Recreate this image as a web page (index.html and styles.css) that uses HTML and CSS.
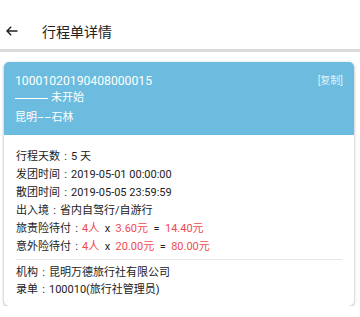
FILE: index.html
```html
<!DOCTYPE html>
<html lang="zh">
<head>
  <meta charset="UTF-8">
  <meta name="viewport" content="width=device-width, initial-scale=1.0">
  <title>行程单详情</title>
  <link rel="stylesheet" href="styles.css">
</head>
<body>
  <header class="topbar">
    <span class="back">
      <svg width="12" height="10" viewBox="0 0 12 10"><path d="M11.5 5H1.2M5.2 0.8L1 5l4.2 4.2" fill="none" stroke="#222" stroke-width="1.4"/></svg>
    </span>
    <h1>行程单详情</h1>
  </header>

  <main>
    <div class="card">
      <div class="card-head">
        <div class="head-row">
          <span class="code">10001020190408000015</span>
          <span class="copy">[复制]</span>
        </div>
        <div class="status"><span class="line"></span> 未开始</div>
        <div class="route">昆明––石林</div>
      </div>
      <div class="card-body">
        <div class="info">
          <p>行程天数<span class="colon">:</span>5 天</p>
          <p>发团时间<span class="colon">:</span>2019-05-01 00:00:00</p>
          <p>散团时间<span class="colon">:</span>2019-05-05 23:59:59</p>
          <p>出入境<span class="colon">:</span>省内自驾行/自游行</p>
          <p>旅责险待付<span class="colon">:</span><span class="red">4人</span>&nbsp;&nbsp;x&nbsp;&nbsp;<span class="red">3.60元</span>&nbsp;&nbsp;=&nbsp;&nbsp;<span class="red">14.40元</span></p>
          <p>意外险待付<span class="colon">:</span><span class="red">4人</span>&nbsp;&nbsp;x&nbsp;&nbsp;<span class="red">20.00元</span>&nbsp;&nbsp;=&nbsp;&nbsp;<span class="red">80.00元</span></p>
        </div>
        <div class="owner">
          <p>机构<span class="colon">:</span>昆明万德旅行社有限公司</p>
          <p>录单<span class="colon">:</span>100010(旅行社管理员)</p>
        </div>
      </div>
    </div>
  </main>
</body>
</html>
```

FILE: styles.css
```css
body {
  margin: 0;
  font-family: Roboto, "Noto Sans CJK SC", sans-serif;
  background: #fff;
  color: #222;
}

.topbar {
  height: 49px;
  display: flex;
  align-items: center;
  padding-left: 6px;
  border-bottom: 3px solid #dadada;
  box-sizing: content-box;
}

.back {
  display: flex;
  width: 12px;
  margin-top: 13px;
}

.topbar h1 {
  margin: 0 0 0 24px;
  font-size: 14px;
  font-weight: normal;
  color: #222;
  padding-top: 13px;
}

main {
  padding: 10px 6px 0 4px;
}

.card {
  border-radius: 5px;
  overflow: hidden;
  box-shadow: 0 1px 3px rgba(0, 0, 0, 0.35);
}

.card-head {
  background: #6bbcde;
  color: #fff;
  padding: 11px 11px 0 11px;
  height: 62px;
}

.head-row {
  display: flex;
  justify-content: space-between;
  align-items: center;
  font-size: 12.2px;
  line-height: 16px;
}

.copy {
  font-size: 10px;
  color: #e4f2f9;
}

.status {
  font-size: 11px;
  line-height: 18px;
  display: flex;
  align-items: center;
  gap: 3px;
}

.status .line {
  display: inline-block;
  width: 33px;
  height: 1px;
  background: #fff;
}

.route {
  font-size: 11px;
  line-height: 16px;
  margin-top: 3px;
}

.card-body {
  padding: 13px 12px 8px 12px;
  font-size: 11px;
}

.card-body p {
  margin: 0;
}

.info p {
  line-height: 18px;
}

.info {
  padding-bottom: 3px;
  border-bottom: 1px solid #e6e6e6;
  margin-bottom: 4px;
}

.owner p {
  line-height: 17px;
}

.colon {
  display: inline-block;
  width: 11px;
  text-align: center;
}

.red {
  color: #f04a4e;
}
```
